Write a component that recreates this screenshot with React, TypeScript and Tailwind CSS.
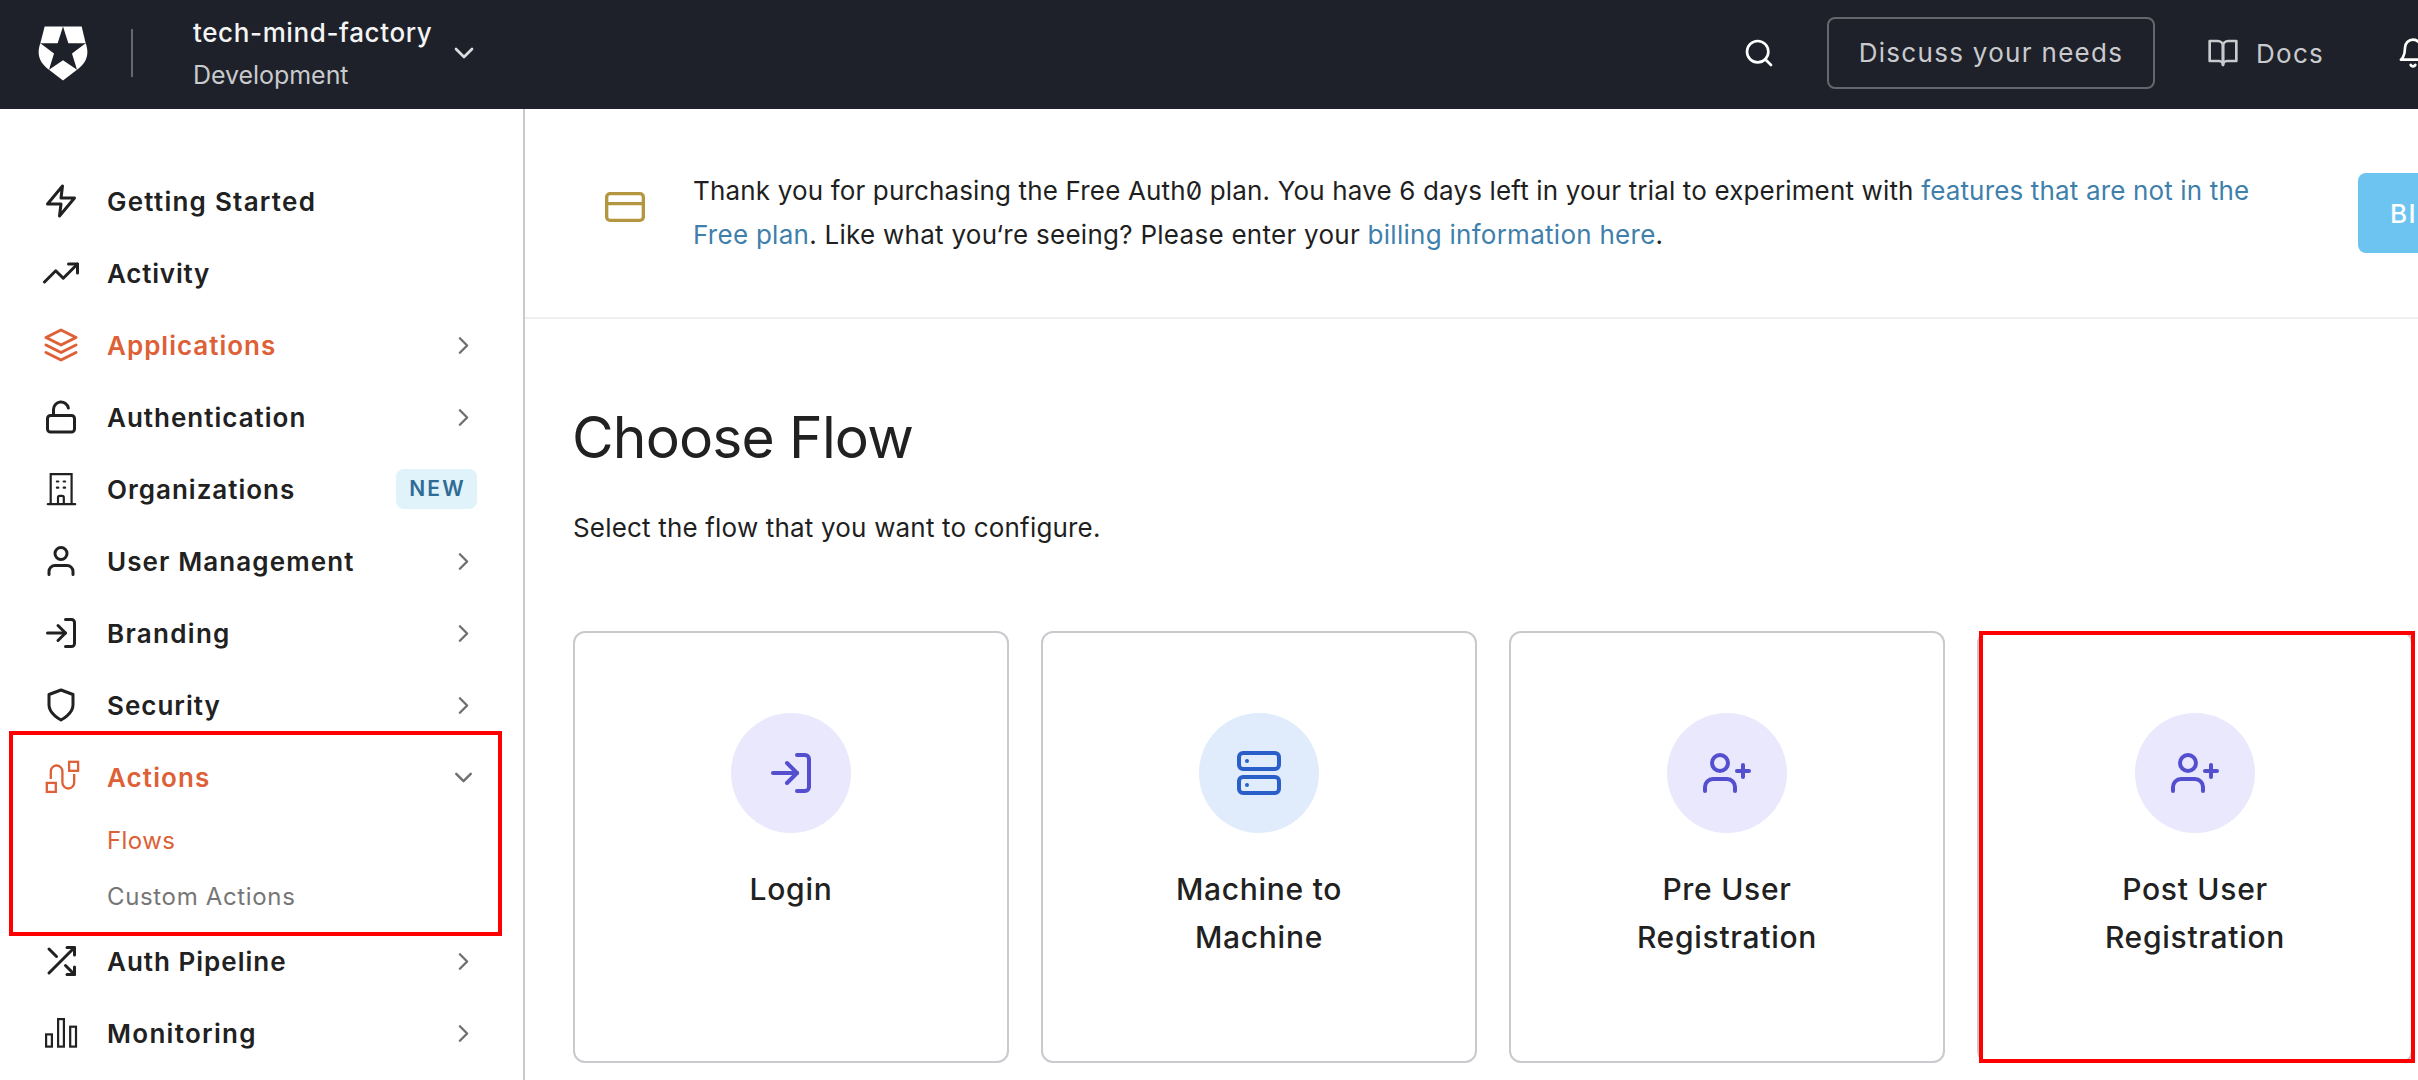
import React from 'react';
import {
  FiBell,
  FiBookOpen,
  FiChevronDown,
  FiChevronRight,
  FiCreditCard,
  FiLayers,
  FiLogIn,
  FiSearch,
  FiServer,
  FiShield,
  FiShuffle,
  FiTrendingUp,
  FiUnlock,
  FiUser,
  FiUserPlus,
  FiZap,
} from 'react-icons/fi';

type IconType = React.ComponentType<{ className?: string }>;

function Logo() {
  return (
    <svg viewBox="0 0 150 164" className="h-[55px] w-[50px] shrink-0 fill-white">
      <path d="M20 1H75L59 51H7Z" />
      <path d="M75 1H131L143 51H91Z" />
      <path d="M7 51L48 82L33 131C7 112-6 87 7 51Z" />
      <path d="M143 51L102 82L117 131C143 112 156 87 143 51Z" />
      <path d="M75 102L117 131L75 163L33 131Z" />
    </svg>
  );
}

function BuildingIcon({ className }: { className?: string }) {
  return (
    <svg viewBox="0 0 36 36" fill="none" stroke="currentColor" strokeWidth="2.2" className={className}>
      <path d="M7.7 33V3.2H28.6V33" />
      <path d="M4.8 33.2H32.2" strokeLinecap="round" />
      <path d="M13.9 10.5h1.4M20.7 10.5h1.4M13.9 16.7h1.4M20.7 16.7h1.4" strokeLinecap="round" />
      <path d="M15 33V26.5q0-1.7 1.7-1.7h2.4q1.7 0 1.7 1.7V33" />
    </svg>
  );
}

function FlowIcon({ className }: { className?: string }) {
  return (
    <svg viewBox="0 0 36 36" fill="none" stroke="currentColor" strokeWidth="2.3" className={`overflow-visible ${className}`}>
      <rect x="3.8" y="23.9" width="9" height="9" />
      <rect x="26.1" y="2.8" width="9" height="9" />
      <path d="M7.8 20V12.3a5.8 5.8 0 0 1 11.6 0V23.6a5.9 5.9 0 0 0 11.8 0V15" />
    </svg>
  );
}

function BarsIcon({ className }: { className?: string }) {
  return (
    <svg viewBox="0 0 36 36" fill="none" stroke="currentColor" strokeWidth="2.2" className={className}>
      <rect x="3.1" y="19.4" width="5.8" height="12.2" />
      <rect x="15.1" y="4.1" width="5.8" height="27.5" />
      <rect x="27.2" y="11.7" width="5.8" height="19.9" />
    </svg>
  );
}

type NavRowProps = {
  icon: IconType;
  label: string;
  tracking?: string;
  active?: boolean;
  trailing?: 'right' | 'down' | 'new';
};

function NavRow({ icon: Icon, label, tracking = 'tracking-[1px]', active, trailing }: NavRowProps) {
  return (
    <a className={`flex h-[72px] items-center pr-[45px] pl-[43px] ${active ? 'text-[#dd6037]' : 'text-[#212121]'}`}>
      <Icon className="size-9 shrink-0" />
      <span className={`ml-7 flex-1 text-[26px] font-semibold whitespace-nowrap ${tracking}`}>{label}</span>
      {trailing === 'right' && <FiChevronRight className="size-[29px] text-[#707070]" />}
      {trailing === 'down' && <FiChevronDown className="size-[29px] text-[#707070]" />}
      {trailing === 'new' && (
        <span className="mr-px flex h-10 w-[81px] items-center justify-center rounded-lg bg-[#e0f2fa] pl-[2px] text-[21px] font-semibold tracking-[2.1px] text-[#2f6c95]">
          NEW
        </span>
      )}
    </a>
  );
}

function Sidebar() {
  return (
    <nav className="w-[525px] shrink-0 border-r-2 border-[#c9cace] pt-14">
      <NavRow icon={FiZap} label="Getting Started" tracking="tracking-[1.25px]" />
      <NavRow icon={FiTrendingUp} label="Activity" tracking="tracking-[0.8px]" />
      <NavRow icon={FiLayers} label="Applications" active trailing="right" />
      <NavRow icon={FiUnlock} label="Authentication" trailing="right" />
      <NavRow icon={BuildingIcon} label="Organizations" trailing="new" />
      <NavRow icon={FiUser} label="User Management" tracking="tracking-[1.1px]" trailing="right" />
      <NavRow icon={FiLogIn} label="Branding" tracking="tracking-[1.3px]" trailing="right" />
      <NavRow icon={FiShield} label="Security" trailing="right" />
      <div className="relative">
        <NavRow icon={FlowIcon} label="Actions" tracking="tracking-[1.1px]" active trailing="down" />
        <a className="flex h-14 items-center pl-[107px] text-2xl tracking-[0.4px] text-[#dd6037]">Flows</a>
        <a className="flex h-14 items-center pl-[107px] text-2xl tracking-[0.65px] text-[#767676]">Custom Actions</a>
        <div className="absolute -top-[10px] left-[9px] h-[205px] w-[493px] border-4 border-[#ff0000]" />
      </div>
      <NavRow icon={FiShuffle} label="Auth Pipeline" trailing="right" />
      <NavRow icon={BarsIcon} label="Monitoring" tracking="tracking-[1.3px]" trailing="right" />
    </nav>
  );
}

function TopBar() {
  return (
    <header className="flex h-[109px] shrink-0 items-center bg-[#1e2129] pb-[3px] pl-[38px]">
      <Logo />
      <div className="ml-[43px] h-12 w-[2px] bg-[#65676e]" />
      <div className="ml-[60px] w-[240px] pt-px leading-[42px] whitespace-nowrap">
        <div className="text-[26px] font-medium tracking-[0.62px] text-[#f4f4f5]">tech-mind-factory</div>
        <div className="text-[25px] tracking-[-0.05px] text-[#c9cace]">Development</div>
      </div>
      <FiChevronDown className="ml-[15px] size-8 text-[#dcdde0]" />
      <div className="-mr-[11px] ml-auto flex items-center gap-[52px] text-[#c9cace]">
        <FiSearch className="size-8 text-white" />
        <button className="h-[72px] w-[328px] rounded-lg border-2 border-[#65676e] pb-px text-[26px] tracking-[1.3px] whitespace-nowrap">
          Discuss your needs
        </button>
        <a className="flex w-[138px] items-center gap-[17px] text-[26px] tracking-[1.3px]">
          <FiBookOpen className="size-8 shrink-0" />
          Docs
        </a>
        <FiBell className="size-8 text-white" />
      </div>
    </header>
  );
}

function TrialBanner() {
  return (
    <section className="flex h-[210px] items-center border-b-2 border-[#efeff2] pl-20">
      <FiCreditCard className="-mt-3 size-10 shrink-0 text-[#b59640]" />
      <p className="ml-12 w-[1600px] shrink-0 text-[26px] leading-[44px] tracking-[0.155px] text-[#1f1f1f]">
        Thank you for purchasing the Free Auth<span className="slashed-zero">0</span> plan. You have 6 days left in your
        trial to experiment with <a className="text-[#3f7fab]">features that are not in the </a>
        <span className="tracking-[0.27px]">
          <a className="text-[#3f7fab]">Free plan</a>. Like what you‘re seeing? Please enter your{' '}
          <a className="text-[#3f7fab]">billing information here</a>.
        </span>
      </p>
      <button className="ml-[65px] h-20 w-[180px] shrink-0 rounded-lg bg-[#6dc4f0] pl-[32px] text-left text-[26px] font-medium tracking-[1.5px] text-white">
        BILLING
      </button>
    </section>
  );
}

type Flow = { title: string; icon: IconType; tone: string; marked?: boolean };

const flows: Flow[] = [
  { title: 'Login', icon: FiLogIn, tone: 'bg-[#e9e8fc] text-[#544fcf]' },
  { title: 'Machine to Machine', icon: FiServer, tone: 'bg-[#e0ecfc] text-[#2a5fc9]' },
  { title: 'Pre User Registration', icon: FiUserPlus, tone: 'bg-[#e9e8fc] text-[#544fcf]' },
  { title: 'Post User Registration', icon: FiUserPlus, tone: 'bg-[#e9e8fc] text-[#544fcf]', marked: true },
];

function FlowCard({ title, icon: Icon, tone, marked }: Flow) {
  return (
    <article className="relative flex h-[432px] w-[436px] flex-col items-center rounded-xl border-2 border-[#c9cace] pt-20">
      <div className={`flex size-[120px] items-center justify-center rounded-full ${tone}`}>
        <Icon className="size-12" />
      </div>
      <h2 className="mt-8 w-[220px] text-center text-[30px] leading-[48px] font-medium tracking-[0.72px] text-[#212121]">
        {title}
      </h2>
      {marked && <div className="absolute -top-[2px] left-0 h-[432px] w-[436px] border-4 border-[#ff0000]" />}
    </article>
  );
}

export default function App() {
  return (
    <div className="flex h-[1080px] w-[2418px] flex-col overflow-hidden bg-white font-['Inter',sans-serif]">
      <TopBar />
      <div className="flex min-h-0 flex-1">
        <Sidebar />
        <main className="min-w-0 flex-1 overflow-hidden">
          <TrialBanner />
          <div className="pt-[79px] pl-12">
            <h1 className="-ml-px text-[57px] leading-[80px] tracking-[-0.85px] text-[#212121]">Choose Flow</h1>
            <p className="mt-7 text-[26px] leading-[44px] tracking-[0.18px] text-[#1f1f1f]">
              Select the flow that you want to configure.
            </p>
            <div className="mt-[81px] flex gap-8">
              {flows.map((flow) => (
                <FlowCard key={flow.title} {...flow} />
              ))}
            </div>
          </div>
        </main>
      </div>
    </div>
  );
}
